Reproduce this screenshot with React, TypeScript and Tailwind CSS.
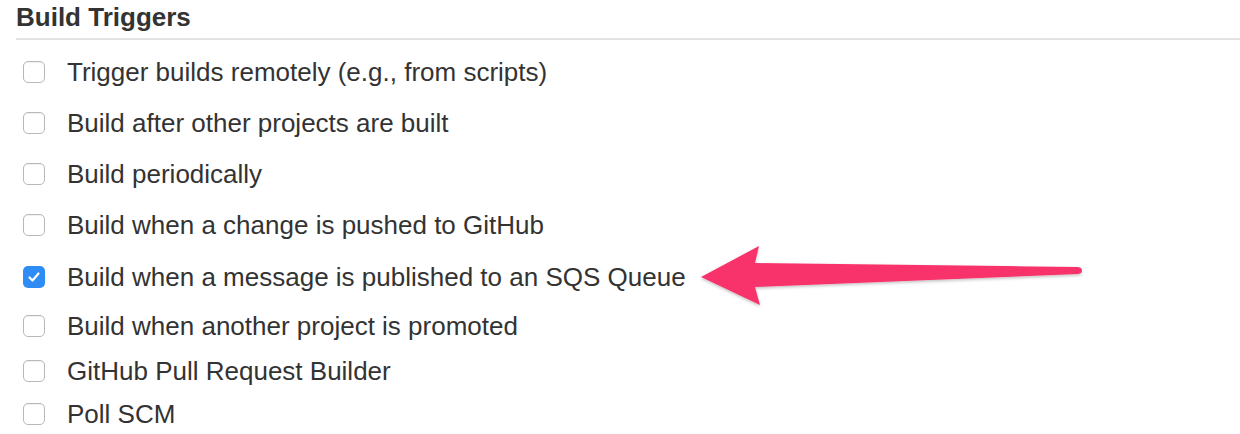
const triggers = [
  { label: "Trigger builds remotely (e.g., from scripts)", h: "h-[51px]" },
  { label: "Build after other projects are built", h: "h-[51px]" },
  { label: "Build periodically", h: "h-[51px]" },
  { label: "Build when a change is pushed to GitHub", h: "h-[52px]" },
  { label: "Build when a message is published to an SQS Queue", h: "h-[51px]", checked: true },
  { label: "Build when another project is promoted", h: "h-[47px]" },
  { label: "GitHub Pull Request Builder", h: "h-[43px]" },
  { label: "Poll SCM", h: "h-[43px]" },
]

const Checkbox = ({ checked }: { checked?: boolean }) =>
  checked ? (
    <span className="flex h-[22px] w-[22px] items-center justify-center rounded-[5px] bg-[#2f8cf4]">
      <svg width="14" height="12" viewBox="0 0 14 12" fill="none">
        <path d="M2.5 6.5 L5.5 9.5 L11.5 2.5" stroke="white" strokeWidth="2.2" strokeLinecap="round" strokeLinejoin="round" />
      </svg>
    </span>
  ) : (
    <span className="block h-[22px] w-[22px] rounded-[5px] border border-[#b8b8b8] bg-white shadow-[inset_0_1px_1px_rgba(0,0,0,0.06)]" />
  )

export default function App() {
  return (
    <div className="relative h-[434px] w-[1240px] overflow-hidden bg-white font-['Liberation_Sans',Arial,sans-serif] text-[#333]">
      <div className="pl-4">
        <h2 className="h-[38px] pt-[1px] text-[26px] leading-[32px] font-bold">Build Triggers</h2>
        <div className="h-[2px] bg-[#e2e2e2]" />
      </div>
      <ul className="pt-[6px]">
        {triggers.map((t) => (
          <li key={t.label} className={`${t.h} flex items-center`}>
            <span className="ml-[23px] mr-[22px]">
              <Checkbox checked={t.checked} />
            </span>
            <span className="text-[26px] leading-none">{t.label}</span>
          </li>
        ))}
      </ul>
      <svg className="pointer-events-none absolute top-0 left-0" width="1240" height="434" viewBox="0 0 1240 434">
        <defs>
          <filter id="sh" x="-10%" y="-50%" width="120%" height="200%">
            <feDropShadow dx="0" dy="1.5" stdDeviation="1.5" floodColor="#000" floodOpacity="0.25" />
          </filter>
        </defs>
        <path
          d="M701 277 L759 246 L755 263 L1078 267 Q1082 267.5 1082 270.5 Q1082 273.5 1078 274 L755 287 L760 305 Z"
          fill="#f8336b"
          filter="url(#sh)"
        />
      </svg>
    </div>
  )
}
